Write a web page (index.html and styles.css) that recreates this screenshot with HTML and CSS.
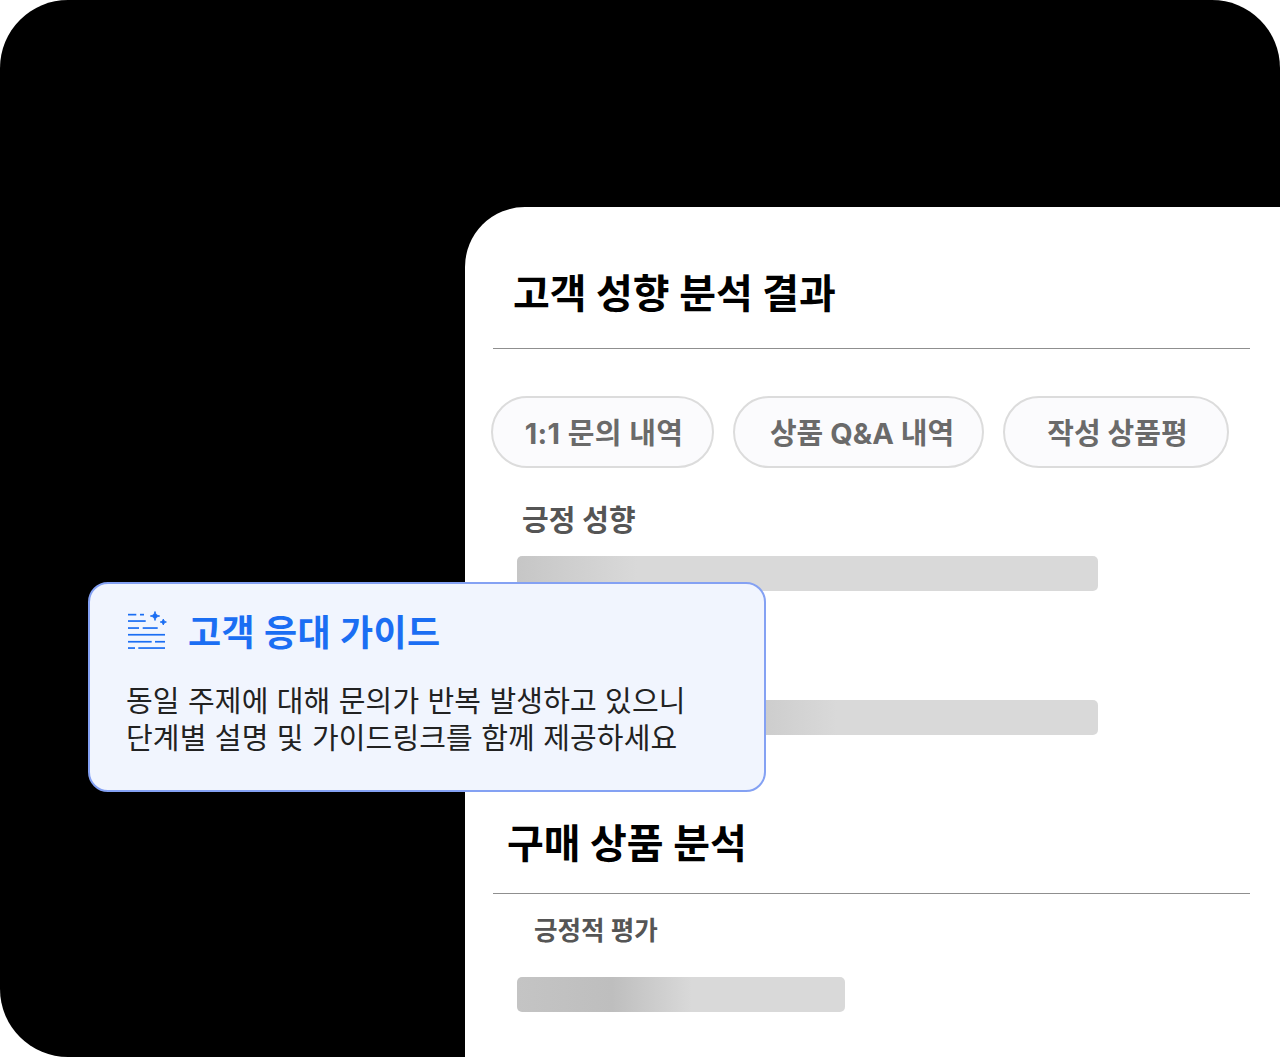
FILE: index.html
```html
<!DOCTYPE html>
<html lang="ko">
<head>
<meta charset="utf-8">
<title>고객 성향 분석 결과</title>
<link rel="stylesheet" href="styles.css">
</head>
<body>
<div class="stage">
  <main class="panel">
    <h2 class="heading heading-first">고객 성향 분석 결과</h2>
    <hr class="rule">
    <div class="tabs">
      <span class="tab tab-a">1:1 문의 내역</span>
      <span class="tab tab-b">상품 Q&amp;A 내역</span>
      <span class="tab tab-c">작성 상품평</span>
    </div>
    <h3 class="label label-first">긍정 성향</h3>
    <div class="bar bar-wide"></div>
    <div class="bar bar-wide bar-second"></div>
    <h2 class="heading heading-second">구매 상품 분석</h2>
    <hr class="rule">
    <h3 class="label label-second">긍정적 평가</h3>
    <div class="bar bar-short"></div>
  </main>
  <aside class="guide">
    <div class="guide-head">
      <svg class="guide-icon" width="40" height="38" viewBox="0 0 40 38" fill="#1b6ef3" aria-hidden="true">
        <rect x="0" y="1.800" width="8.300" height="1.700"/><rect x="12" y="1.800" width="4" height="1.700"/>
        <rect x="0" y="8.200" width="17.700" height="1.700"/>
        <rect x="0" y="15.200" width="11" height="1.700"/><rect x="14.700" y="15.200" width="15" height="1.700"/>
        <rect x="0" y="21.900" width="37" height="1.700"/>
        <rect x="0" y="28.900" width="23.700" height="1.700"/><rect x="27" y="28.900" width="10" height="1.700"/>
        <rect x="0" y="35.200" width="7" height="1.700"/><rect x="10.300" y="35.200" width="26.700" height="1.700"/>
        <path class="guide-spark" d="M27 -0.500 C27.500 2.200 28.800 3.500 31.700 4 C28.800 4.500 27.500 5.800 27 8.500 C26.500 5.800 25.200 4.500 22.300 4 C25.200 3.500 26.500 2.200 27 -0.500Z"/>
        <path class="guide-spark" d="M35.300 7 C35.700 8.700 36.500 9.500 38.400 10 C36.500 10.500 35.700 11.300 35.300 13 C34.900 11.300 34.100 10.500 32.200 10 C34.100 9.500 34.900 8.700 35.300 7Z"/>
      </svg>
      <h2 class="guide-title">고객 응대 가이드</h2>
    </div>
    <p class="guide-text">동일 주제에 대해 문의가 반복 발생하고 있으니<br>단계별 설명 및 가이드링크를 함께 제공하세요</p>
  </aside>
</div>
</body>
</html>
```
FILE: styles.css
```css
* { box-sizing: border-box; }
html, body { margin: 0; padding: 0; background: #fff; }
body { font-family: "Inter", "Noto Sans CJK KR", sans-serif; }
.stage {
  position: relative;
  width: 1280px;
  height: 1057px;
  overflow: hidden;
  background: #000;
  border-radius: 68px 68px 0 68px;
  padding: 207px 0 0 465px;
}
.panel {
  height: 850px;
  background: #fff;
  border-top-left-radius: 60px;
  padding: 0 30px 0 28px;
}
.heading { margin: 0; color: #000; font-weight: 700; font-size: 40px; line-height: 52px; letter-spacing: 0; }
.heading-first { padding: 61px 0 0 20px; margin-bottom: 28px; }
.heading-second { padding-left: 14px; margin-top: 83px; margin-bottom: 23px; }
.rule { margin: 0; border: 0; height: 1px; background: #8f8f8f; }
.tabs { display: flex; gap: 19px; margin-top: 47px; margin-left: -2px; }
.tab {
  display: flex;
  align-items: center;
  justify-content: center;
  height: 72px;
  padding: 0 0 2px 3px;
  border: 2px solid #dcdcdc;
  border-radius: 36px;
  background: #fbfbfd;
  color: #6a6a6a;
  font-size: 29px;
  font-weight: 700;
  letter-spacing: 0;
}
.tab-a { width: 223px; letter-spacing: 0.4px; }
.tab-b { width: 251px; padding-left: 7px; }
.tab-c { width: 226px; }
.label { margin: 0; color: #555; font-weight: 700; }
.label-first { font-size: 29px; line-height: 40px; margin: 33px 0 15px 29px; }
.label-second { font-size: 25.600px; line-height: 38px; margin: 18px 0 27px 41px; }
.bar { margin-left: 24px; height: 35px; border-radius: 5px; }
.bar-wide { width: 581px; background: linear-gradient(90deg, #c6c6c6 0, #d9d9d9 120px, #d9d9d9 100%); }
.bar-second { margin-top: 109px; background: linear-gradient(90deg, #bdbdbd 0, #bdbdbd 150px, #d9d9d9 320px, #d9d9d9 100%); }
.bar-short { width: 328px; background: linear-gradient(90deg, #c4c4c4 0, #bebebe 95px, #d9d9d9 175px, #d9d9d9 100%); }
.guide {
  position: absolute;
  left: 88px;
  top: 582px;
  width: 678px;
  height: 210px;
  padding: 22px 36px 0 36px;
  background: #f1f5fe;
  border: 2px solid #84a1f3;
  border-radius: 20px;
}
.guide-head { display: flex; align-items: center; gap: 20px; height: 50px; padding-left: 2px; }
.guide-icon { flex: none; overflow: visible; }
.guide-spark { stroke: #1b6ef3; stroke-width: 0.9; stroke-linejoin: round; }
.guide-title { margin: 4px 0 0; color: #1b6ef3; font-size: 36px; line-height: 50px; font-weight: 700; letter-spacing: 0.4px; }
.guide-text { margin: 27px 0 0; color: #222; font-size: 29px; line-height: 37px; font-weight: 400; letter-spacing: 0.15px; white-space: nowrap; }
```
